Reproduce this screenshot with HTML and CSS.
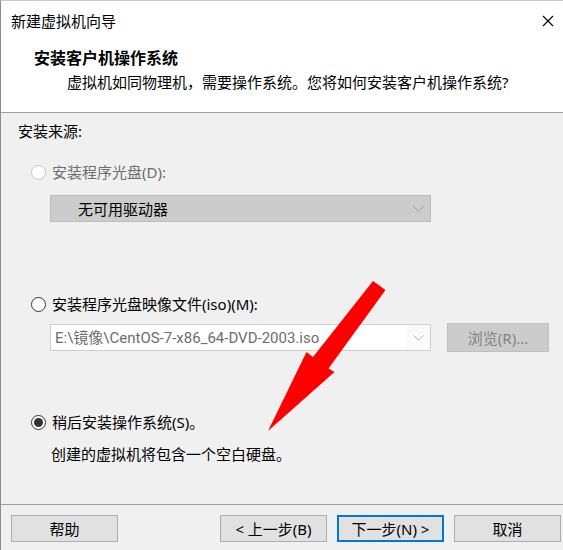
FILE: index.html
```html
<!DOCTYPE html>
<html lang="zh-CN">
<head>
<meta charset="utf-8">
<title>新建虚拟机向导</title>
<link rel="stylesheet" href="styles.css">
</head>
<body>
<div class="window">
  <div class="header">
    <div class="titlebar">
      <span class="title">新建虚拟机向导</span>
      <svg class="close" width="12" height="12" viewBox="0 0 12 12"><path d="M1 1 L11 11 M11 1 L1 11" stroke="#000" stroke-width="1.1" fill="none"/></svg>
    </div>
    <div class="heading">安装客户机操作系统</div>
    <div class="subtitle">虚拟机如同物理机，需要操作系统。您将如何安装客户机操作系统?</div>
  </div>
  <div class="content">
    <div class="section-label">安装来源:</div>

    <div class="radio-row r1">
      <span class="radio disabled"></span>
      <span class="label disabled-text">安装程序光盘(D):</span>
    </div>
    <div class="dropdown">
      <span class="dd-text">无可用驱动器</span>
      <svg class="chev" width="11" height="6" viewBox="0 0 11 6"><path d="M0.5 0.5 L5.5 5 L10.5 0.5" stroke="#9a9a9a" fill="none"/></svg>
    </div>

    <div class="radio-row r2">
      <span class="radio"></span>
      <span class="label">安装程序光盘映像文件(iso)(M):</span>
    </div>
    <div class="iso-row">
      <div class="combo">
        <span class="combo-text">E:\镜像\CentOS-7-x86_64-DVD-2003.iso</span>
        <span class="combo-btn">
          <svg width="11" height="6" viewBox="0 0 11 6"><path d="M0.5 0.5 L5.5 5 L10.5 0.5" stroke="#b0b0b0" fill="none"/></svg>
        </span>
      </div>
      <div class="browse">浏览(R)...</div>
    </div>

    <div class="radio-row r3">
      <span class="radio checked"></span>
      <span class="label">稍后安装操作系统(S)。</span>
    </div>
    <div class="desc">创建的虚拟机将包含一个空白硬盘。</div>
  </div>
  <div class="footer">
    <div class="btn">帮助</div>
    <div class="spacer"></div>
    <div class="btn">&lt; 上一步(B)</div>
    <div class="btn default">下一步(N) &gt;</div>
    <div class="btn">取消</div>
  </div>
  <svg class="arrow" width="563" height="550" viewBox="0 0 563 550">
    <polygon points="373,281 385.5,290 328.5,368.5 334.5,372 268,431 306.5,352 313,357" fill="#ff0000"/>
  </svg>
</div>
</body>
</html>
```
FILE: styles.css
```css
* { box-sizing: border-box; }
html, body {
  margin: 0;
  padding: 0;
}
body {
  width: 563px;
  height: 550px;
  overflow: hidden;
  background: #f0f0f0;
  font-family: "Noto Sans", "Noto Sans CJK SC", sans-serif;
  font-size: 15px;
  line-height: 20px;
  color: #000;
}
.window {
  position: relative;
  width: 563px;
  height: 550px;
  display: flex;
  flex-direction: column;
  border-left: 1px solid #8c8c8c;
  border-top: 1px solid #c8c8c8;
}
.header {
  background: #fff;
  height: 112px;
  border-bottom: 1px solid #a0a0a0;
  display: flex;
  flex-direction: column;
}
.titlebar {
  height: 40px;
  display: flex;
  align-items: center;
  padding-left: 10px;
  padding-right: 9px;
}
.title {
  flex: 1;
}
.close { display: block; }
.heading {
  font-weight: bold;
  font-size: 16px;
  padding-left: 33px;
  margin-top: 7px;
}
.subtitle {
  padding-left: 66px;
  margin-top: 4px;
}
.content {
  flex: 1;
  display: flex;
  flex-direction: column;
  padding-left: 17px;
}
.section-label {
  margin-top: 8px;
}
.radio-row {
  display: flex;
  align-items: center;
  height: 20px;
  margin-left: 13px;
}
.r1 { margin-top: 21px; }
.r2 { margin-top: 72px; }
.r3 { margin-top: 60px; }
.radio {
  width: 15px;
  height: 15px;
  border-radius: 50%;
  border: 1px solid #333;
  background: #fff;
  margin-right: 6px;
  display: flex;
  align-items: center;
  justify-content: center;
}
.radio.disabled {
  border-color: #c4c4c4;
}
.radio.checked::after {
  content: "";
  width: 9px;
  height: 9px;
  border-radius: 50%;
  background: #333;
}
.disabled-text { color: #6d6d6d; }
.dropdown {
  margin-top: 13px;
  margin-left: 32px;
  width: 381px;
  height: 27px;
  background: #cccccc;
  border: 1px solid #bcbcbc;
  display: flex;
  align-items: center;
  padding-left: 27px;
  padding-right: 6px;
}
.dd-text { flex: 1; }
.chev { display: block; }
.iso-row {
  margin-top: 9px;
  margin-left: 32px;
  display: flex;
  align-items: center;
}
.combo {
  width: 381px;
  height: 27px;
  background: #fff;
  border: 1px solid #cfcfcf;
  display: flex;
  align-items: center;
}
.combo-text {
  flex: 1;
  color: #6d6d6d;
  padding-left: 4px;
  white-space: nowrap;
  background: #fff;
  font-family: Roboto, "Noto Sans CJK SC", sans-serif;
}
.combo-btn {
  width: 24px;
  height: 25px;
  display: flex;
  align-items: center;
  justify-content: center;
  background: #fafafa;
}
.combo-btn svg { display: block; }
.browse {
  margin-left: 16px;
  width: 102px;
  height: 29px;
  background: #cccccc;
  border: 1px solid #bfbfbf;
  color: #838383;
  display: flex;
  align-items: center;
  justify-content: center;
}
.desc {
  margin-top: 12px;
  margin-left: 33px;
}
.footer {
  border-top: 1px solid #a0a0a0;
  height: 46px;
  display: flex;
  align-items: flex-start;
  padding: 10px 2px 0 10px;
  gap: 10px;
}
.spacer { flex: 1; }
.btn {
  width: 107px;
  height: 27px;
  background: #e1e1e1;
  border: 1px solid #adadad;
  display: flex;
  align-items: center;
  justify-content: center;
}
.btn.default {
  border: 2px solid #0078d7;
}
.arrow {
  position: absolute;
  left: -1px;
  top: -1px;
  pointer-events: none;
}
```
